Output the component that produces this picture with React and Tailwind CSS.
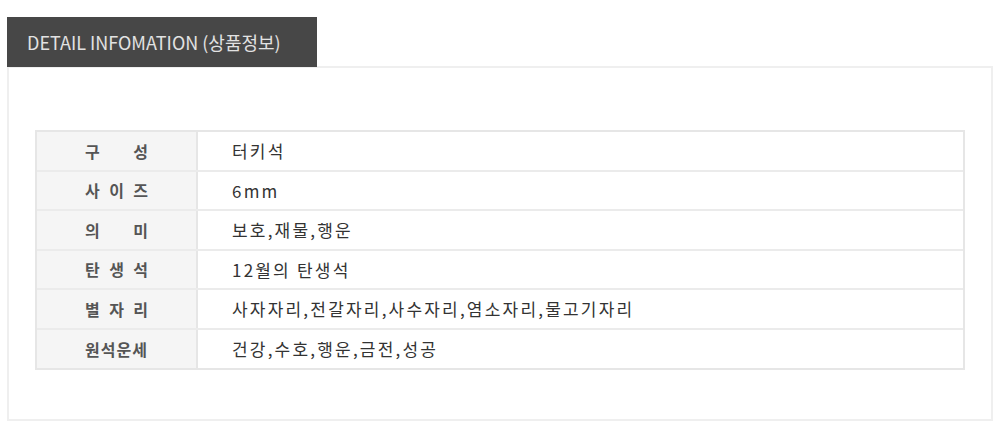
import React from "react";

const ROWS = [
  { label: ["구", "성"], value: "터키석" },
  { label: ["사", "이", "즈"], value: "6mm" },
  { label: ["의", "미"], value: "보호,재물,행운" },
  { label: ["탄", "생", "석"], value: "12월의 탄생석" },
  { label: ["별", "자", "리"], value: "사자자리,전갈자리,사수자리,염소자리,물고기자리" },
  { label: ["원석운세"], value: "건강,수호,행운,금전,성공" },
];

const FONT = { fontFamily: '"Noto Sans CJK KR", "Noto Sans", sans-serif' };

export default function App() {
  return (
    <div className="w-[1000px] h-[445px] bg-white pt-[17px] px-[7px]" style={FONT}>
      {/* tab */}
      <div className="relative z-10 flex h-[50px] w-[310px] items-center bg-[#474747] pl-[20px] text-[18px] text-[#e2e2e2]">
        DETAIL INFOMATION (상품정보)
      </div>

      {/* box */}
      <div className="-mt-[1px] h-[355px] border-2 border-[#efefef] px-[26px] pt-[62px]">
        <div className="border-2 border-[#e6e6e6]">
          {ROWS.map((row, i) => (
            <div
              key={i}
              className={`flex ${i < ROWS.length - 1 ? "h-[39.5px] border-b-2 border-[#ebebeb]" : "h-[38px]"}`}
            >
              <div className="flex w-[161px] shrink-0 items-center justify-center border-r-2 border-[#e6e6e6] bg-[#f5f5f5] text-[16px] font-semibold text-[#555]">
                {row.label.length > 1 ? (
                  <span className="flex w-[63px] justify-between">
                    {row.label.map((c, j) => (
                      <span key={j}>{c}</span>
                    ))}
                  </span>
                ) : (
                  <span className="tracking-[1px]">{row.label[0]}</span>
                )}
              </div>
              <div className="flex items-center pl-[34px] text-[17px] tracking-[2.2px] text-[#333]">
                {row.value}
              </div>
            </div>
          ))}
        </div>
      </div>
    </div>
  );
}
